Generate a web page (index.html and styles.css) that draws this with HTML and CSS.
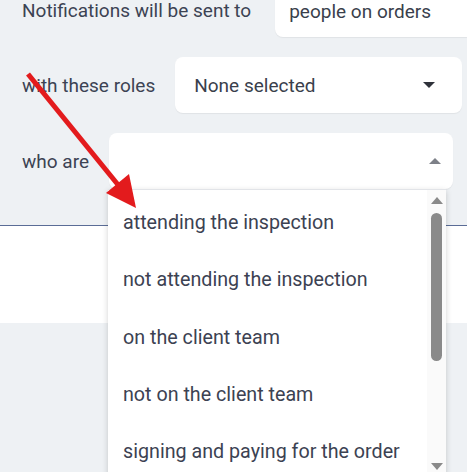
FILE: index.html
```html
<!DOCTYPE html>
<html>
<head>
<meta charset="utf-8">
<link rel="stylesheet" href="styles.css">
</head>
<body>
<div class="page">
  <section class="form">
    <div class="row row-first">
      <span class="label">Notifications will be sent to</span>
      <div class="box box-sent"><span class="value">people on orders</span></div>
    </div>
    <div class="row">
      <span class="label">with these roles</span>
      <div class="box box-roles">
        <span class="value">None selected</span>
        <span class="caret caret-down"></span>
      </div>
    </div>
    <div class="row">
      <span class="label">who are</span>
      <div class="box box-who">
        <span class="value"></span>
        <span class="caret caret-up"></span>
      </div>
    </div>
  </section>
  <section class="panel"></section>
  <div class="rest"></div>

  <div class="dropdown">
    <ul class="options">
      <li>attending the inspection</li>
      <li>not attending the inspection</li>
      <li>on the client team</li>
      <li>not on the client team</li>
      <li>signing and paying for the order</li>
    </ul>
    <div class="scrollbar">
      <span class="sb-arrow sb-up"></span>
      <span class="sb-thumb"></span>
      <span class="sb-arrow sb-down"></span>
    </div>
  </div>

  <svg class="pointer" width="467" height="472" viewBox="0 0 467 472">
    <line x1="28" y1="74" x2="119" y2="186" stroke="#e31b1d" stroke-width="5"/>
    <polygon points="106,193 129,174 136,208" fill="#e31b1d"/>
  </svg>
</div>
</body>
</html>
```

FILE: styles.css
```css
* { box-sizing: border-box; }
html, body {
  margin: 0;
  padding: 0;
  width: 467px;
  height: 472px;
  overflow: hidden;
  background: #eef1f4;
  font-family: Roboto, "Noto Sans", sans-serif;
  font-size: 19px;
  color: #3c4353;
}
.page {
  position: relative;
  width: 467px;
  height: 472px;
  display: flex;
  flex-direction: column;
  overflow: hidden;
}
.form {
  display: flex;
  flex-direction: column;
  gap: 20px;
  padding: 0 0 0 22px;
  margin-top: -19px;
  height: 245px;
  border-bottom: 1px solid #5a6c96;
  background: #eef1f4;
}
.row {
  display: flex;
  align-items: center;
  gap: 20px;
  height: 56px;
  flex: none;
}
.label {
  white-space: nowrap;
  line-height: 1;
}
.row-first .label { position: relative; top: 1px; }
.box {
  height: 56px;
  background: #fff;
  border-radius: 8px;
  display: flex;
  align-items: center;
  box-shadow: 0 1px 1px rgba(0, 0, 0, 0.06);
  flex: none;
}
.value { flex: 1; white-space: nowrap; color: #3a3f4c; }
.box-sent {
  flex: 1;
  margin-left: 4px;
  padding-left: 14px;
  padding-top: 4px;
  border-radius: 8px 0 0 8px;
}
.box-roles { width: 287px; padding-left: 19px; padding-right: 27px; }
.box-who { width: 344px; padding-left: 16px; padding-right: 12px; }
.caret {
  width: 0;
  height: 0;
  border-left: 6px solid transparent;
  border-right: 6px solid transparent;
}
.caret-down { border-top: 6px solid #2f323a; }
.caret-up { border-bottom: 6px solid #7d8088; }
.panel {
  height: 97px;
  background: #fff;
  flex: none;
}
.rest { flex: 1; background: #eef1f4; }

.dropdown {
  position: absolute;
  left: 108px;
  top: 189px;
  width: 338px;
  height: 300px;
  background: #fff;
  border-top: 1px solid #e2e4e8;
  box-shadow: 0 2px 6px rgba(0, 0, 0, 0.18);
  display: flex;
}
.options {
  list-style: none;
  margin: 0;
  padding: 4px 0 0 0;
  flex: 1;
}
.options li {
  height: 57.3px;
  display: flex;
  align-items: center;
  padding-left: 15px;
  font-size: 19.7px;
  color: #3c4252;
  white-space: nowrap;
}
.scrollbar {
  width: 19px;
  background: #fafafa;
  position: relative;
  display: flex;
  flex-direction: column;
  align-items: center;
  padding-top: 7px;
}
.sb-arrow {
  width: 0;
  height: 0;
  border-left: 6px solid transparent;
  border-right: 6px solid transparent;
}
.sb-up { border-bottom: 7px solid #8a8a8a; }
.sb-down {
  border-top: 7px solid #8a8a8a;
  position: absolute;
  top: 273px;
  left: 4px;
}
.sb-thumb {
  margin-top: 9px;
  width: 11px;
  height: 148px;
  border-radius: 6px;
  background: #8a8a8a;
}
.pointer {
  position: absolute;
  left: 0;
  top: 0;
  pointer-events: none;
}
```
